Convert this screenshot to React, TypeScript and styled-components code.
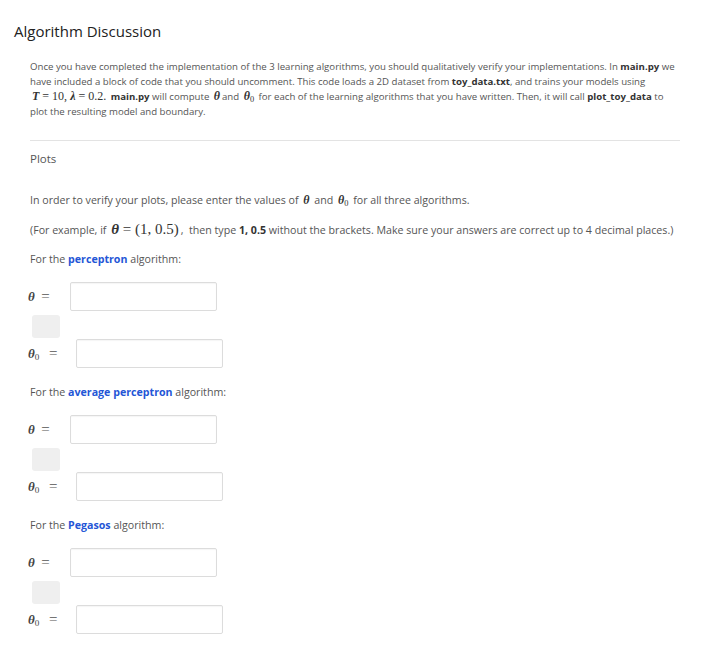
import React from "react";
import styled, { createGlobalStyle } from "styled-components";

const Global = createGlobalStyle`
  html, body { margin: 0; padding: 0; background: #fff; }
  body { font-family: "Open Sans", "Liberation Sans", sans-serif; color: #555; }
  * { box-sizing: border-box; }
`;

const Page = styled.div`
  width: 710px;
  padding: 21px 30px 0 14px;
`;

const Title = styled.h1`
  margin: 0;
  font-size: 15px;
  line-height: 20px;
  font-weight: 400;
  color: #222;
`;

const Content = styled.div`
  padding-left: 16px;
`;

const Intro = styled.p`
  margin: 18px 0 0;
  font-size: 9.65px;
  line-height: 15px;
  color: #555;
  width: 660px;
  white-space: nowrap;
`;

const Divider = styled.hr`
  margin: 21px 0 0;
  border: 0;
  border-top: 1px solid #e3e3e3;
  width: 650px;
`;

const Section = styled.h2`
  margin: 10px 0 0;
  font-size: 11.5px;
  line-height: 16px;
  font-weight: 400;
  color: #555;
`;

const Line = styled.p<{ $gap: number }>`
  margin: ${(p) => p.$gap}px 0 0;
  font-size: 10.65px;
  line-height: 16px;
  color: #555;
  white-space: nowrap;
`;

const Strong = styled.b`
  font-weight: 700;
  color: #333;
`;

const Link = styled.b`
  font-weight: 700;
  color: #2456d6;
`;

const M = styled.span<{ $size?: number }>`
  font-family: "Liberation Serif", "DejaVu Serif", serif;
  font-size: ${(p) => p.$size ?? 12}px;
  line-height: 1;
  color: #333;
  margin: 0 2px;
`;

const MI = styled.i`
  font-style: italic;
  font-weight: 700;
`;

const Sub = styled.sub`
  font-size: 0.7em;
  line-height: 0;
  vertical-align: -0.25em;
  font-style: normal;
  font-weight: 400;
`;

const Block = styled.div<{ $first?: boolean }>`
  margin-top: ${(p) => (p.$first ? 13 : 16)}px;
`;

const Row = styled.div<{ $gap: number }>`
  display: flex;
  align-items: center;
  margin-top: ${(p) => p.$gap}px;
  margin-left: -2px;
`;

const Label = styled.span<{ $w: number }>`
  width: ${(p) => p.$w}px;
  font-family: "Liberation Serif", "DejaVu Serif", serif;
  font-size: 13px;
  color: #444;
  white-space: pre;
`;

const Eq = styled.span`
  font-size: 15px;
  color: #555;
`;

const Input = styled.div`
  width: 147px;
  height: 29px;
  border: 1px solid #dcdcdc;
  border-radius: 2px;
  background: #fff;
  box-shadow: inset 0 1px 1px rgba(0, 0, 0, 0.04);
`;

const Badge = styled.div`
  width: 28px;
  height: 23px;
  margin-top: 4px;
  margin-left: 2px;
  border-radius: 3px;
  background: #efefef;
`;

const Theta = () => <MI>θ</MI>;

const Theta0 = () => (
  <>
    <MI>θ</MI>
    <Sub>0</Sub>
  </>
);

const AnswerBlock: React.FC<{ name: string; first?: boolean }> = ({ name, first }) => (
  <Block $first={first}>
    <Line $gap={0}>
      For the <Link>{name}</Link> algorithm:
    </Line>
    <Row $gap={15}>
      <Label $w={42}>
        <Theta />{"  "}
        <Eq>=</Eq>
      </Label>
      <Input />
    </Row>
    <Badge />
    <Row $gap={1}>
      <Label $w={48}>
        <Theta0 />{"   "}
        <Eq>=</Eq>
      </Label>
      <Input />
    </Row>
  </Block>
);

export default function App() {
  return (
    <Page>
      <Global />
      <Title>Algorithm Discussion</Title>
      <Content>
        <Intro>
          Once you have completed the implementation of the 3 learning algorithms, you should qualitatively
          verify your implementations. In <Strong>main.py</Strong> we
          <br />
          have included a block of code that you should uncomment. This code loads a 2D dataset from{" "}
          <Strong>toy_data.txt</Strong>, and trains your models using
          <br />
          <M>
            <MI>T</MI> = 10, <MI>λ</MI> = 0.2.
          </M>{" "}
          <Strong>main.py</Strong> will compute <M><Theta /></M>and <M><Theta0 /></M> for each of the learning
          algorithms that you have written. Then, it will call <Strong>plot_toy_data</Strong> to
          <br />
          plot the resulting model and boundary.
        </Intro>
        <Divider />
        <Section>Plots</Section>
        <Line $gap={25}>
          In order to verify your plots, please enter the values of <M><Theta /></M> and <M><Theta0 /></M> for all
          three algorithms.
        </Line>
        <Line $gap={14}>
          (For example, if{" "}
          <M $size={15}>
            <MI>θ</MI> = (1, 0.5)
          </M>
          , &nbsp;then type <Strong>1, 0.5</Strong> without the brackets. Make sure your answers are correct up to 4
          decimal places.)
        </Line>
        <AnswerBlock name="perceptron" first />
        <AnswerBlock name="average perceptron" />
        <AnswerBlock name="Pegasos" />
      </Content>
    </Page>
  );
}
